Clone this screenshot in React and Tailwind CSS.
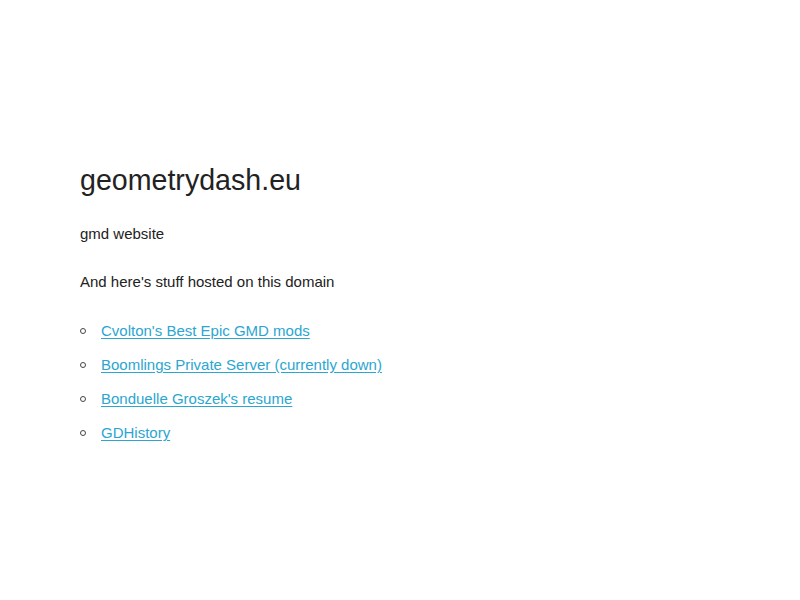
// Single landing page: title, tagline and the list of things hosted here.

import React from 'react';

const links = [
  "Cvolton's Best Epic GMD mods",
  'Boomlings Private Server (currently down)',
  "Bonduelle Groszek's resume",
  'GDHistory',
];

export default function App() {
  return (
    <div className="min-h-[600px] bg-white px-[80px] pt-[166px] text-[#222] font-['Liberation_Sans',Arial,sans-serif]">
      <h1 className="text-[28.6px] leading-[28px] mb-[32px]">geometrydash.eu</h1>
      <p className="text-[15px] leading-[15px] mb-[33px]">gmd website</p>
      <p className="text-[15px] leading-[15px] mb-[34px]">And here's stuff hosted on this domain</p>
      <ul className="flex flex-col gap-[19px]">
        {links.map(label => (
          <li key={label} className="flex items-center text-[15px] leading-[15px]">
            <span className="w-[6px] h-[6px] rounded-full border border-[#444] mt-[1px]" />
            <a href="#" className="ml-[15px] text-[#2ba6d1] underline underline-offset-[2px]">{label}</a>
          </li>
        ))}
      </ul>
    </div>
  );
}
